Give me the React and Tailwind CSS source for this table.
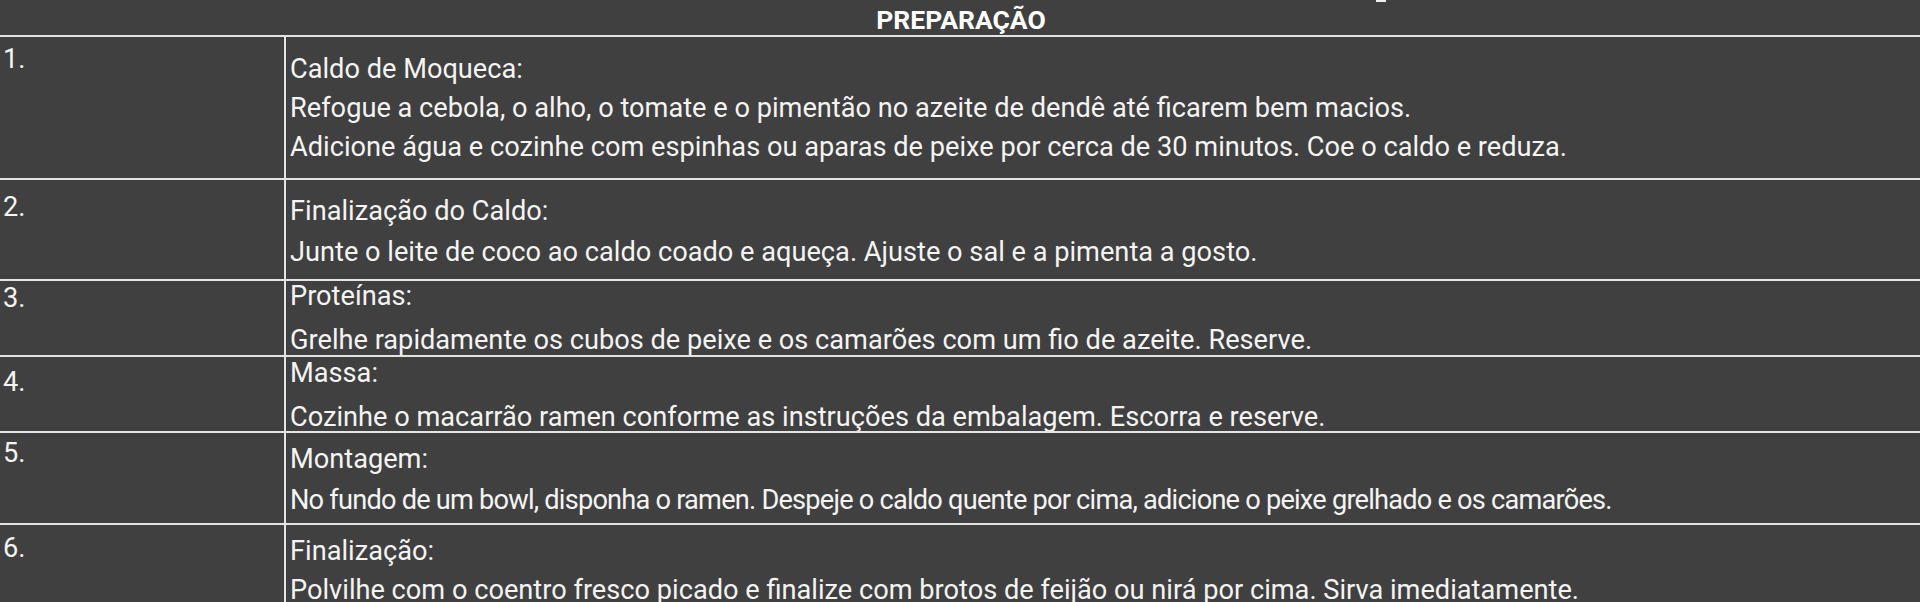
import React from "react";

const rows = [
  {
    n: "1.",
    lines: [
      "Caldo de Moqueca:",
      "Refogue a cebola, o alho, o tomate e o pimentão no azeite de dendê até ficarem bem macios.",
      "Adicione água e cozinhe com espinhas ou aparas de peixe por cerca de 30 minutos. Coe o caldo e reduza.",
    ],
    row: "h-[143px]",
    num: "pt-[7px]",
    txt: "mt-[13px] leading-[39px]",
  },
  {
    n: "2.",
    lines: [
      "Finalização do Caldo:",
      "Junte o leite de coco ao caldo coado e aqueça. Ajuste o sal e a pimenta a gosto.",
    ],
    row: "h-[101px]",
    num: "pt-[12px]",
    txt: "mt-[11px] leading-[41px]",
  },
  {
    n: "3.",
    lines: [
      "Proteínas:",
      "Grelhe rapidamente os cubos de peixe e os camarões com um fio de azeite. Reserve.",
    ],
    row: "h-[76px]",
    num: "pt-[2px]",
    txt: "-mt-[7px] leading-[44px]",
  },
  {
    n: "4.",
    lines: [
      "Massa:",
      "Cozinhe o macarrão ramen conforme as instruções da embalagem. Escorra e reserve.",
    ],
    row: "h-[76px]",
    num: "pt-[10px]",
    txt: "-mt-[6px] leading-[44px]",
  },
  {
    n: "5.",
    lines: [
      "Montagem:",
      "No fundo de um bowl, disponha o ramen. Despeje o caldo quente por cima, adicione o peixe grelhado e os camarões.",
    ],
    row: "h-[92px]",
    num: "pt-[5px]",
    txt: "mt-[6px] leading-[41px]",
    tight: 1,
  },
  {
    n: "6.",
    lines: [
      "Finalização:",
      "Polvilhe com o coentro fresco picado e finalize com brotos de feijão ou nirá por cima. Sirva imediatamente.",
    ],
    row: "h-[90px]",
    num: "pt-[8px]",
    txt: "mt-[7px] leading-[39px]",
  },
];

export default function App() {
  return (
    <div
      className="w-[1920px] h-[602px] overflow-hidden bg-[#404040] text-[#f4f4f4]"
      style={{ fontFamily: "Roboto, 'Liberation Sans', sans-serif" }}
    >
      <div className="relative h-[37px] border-b-2 border-[#e4e4e4] flex items-end justify-center">
        <span className="absolute left-[1376px] top-0 w-[10px] h-[2px] bg-[#f0f0f0]" />
        <span className="ml-[2px] text-[26.5px] leading-[31px] font-bold text-white">PREPARAÇÃO</span>
      </div>
      {rows.map((r) => (
        <div key={r.n} className={`flex border-b-2 border-[#e4e4e4] overflow-hidden ${r.row}`}>
          <div className={`w-[286px] shrink-0 border-r-2 border-[#e4e4e4] pl-[3px] text-[27.2px] leading-[30px] ${r.num}`}>
            {r.n}
          </div>
          <div className={`flex-1 pl-[4px] text-[27.2px] ${r.txt}`}>
            {r.lines.map((l, i) => (
              <div
                key={i}
                className={`whitespace-nowrap ${r.tight && i === 1 ? "tracking-[-0.78px]" : ""}`}
              >
                {l}
              </div>
            ))}
          </div>
        </div>
      ))}
    </div>
  );
}
